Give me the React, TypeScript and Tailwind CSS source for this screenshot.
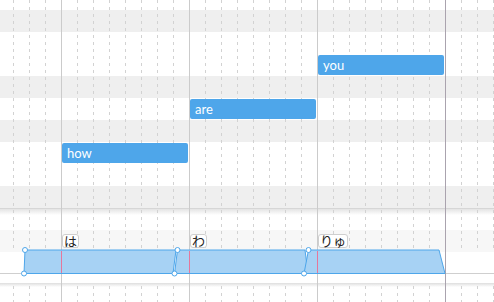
import React from "react";

type Note = { text: string; left: number; top: number };

const notes: Note[] = [
  { text: "how", left: 62, top: 143 },
  { text: "are", left: 190, top: 99 },
  { text: "you", left: 318, top: 55 },
];

// row backgrounds of the piano roll, 22px each (first one cut off)
const rows: { h: string; bg: string }[] = [
  { h: "h-[10px]", bg: "bg-white" },
  { h: "h-[22px]", bg: "bg-[#efefef]" },
  { h: "h-[22px]", bg: "bg-white" },
  { h: "h-[22px]", bg: "bg-white" },
  { h: "h-[22px]", bg: "bg-[#efefef]" },
  { h: "h-[22px]", bg: "bg-white" },
  { h: "h-[22px]", bg: "bg-[#efefef]" },
  { h: "h-[22px]", bg: "bg-white" },
  { h: "h-[22px]", bg: "bg-white" },
  { h: "h-[22px]", bg: "bg-[#efefef]" },
];

const lyrics = [
  { text: "は", left: 62 },
  { text: "わ", left: 190 },
  { text: "りゅ", left: 318 },
];

// lyric blocks: [tl, bl, tr, br] x coords
const blocks = [
  [25, 24, 176, 173],
  [177.5, 174.5, 305, 308],
  [308.5, 304, 439, 445],
];

function GridLines() {
  const dashed: number[] = [];
  for (let x = 13.5; x < 494; x += 16) {
    if ((x - 61.5) % 128 !== 0) dashed.push(x);
  }
  return (
    <svg className="absolute inset-0 pointer-events-none" width={494} height={302}>
      {dashed.map((x) => (
        <g key={x} stroke="#d2d2d2" strokeWidth={1} strokeDasharray="3 4">
          <line x1={x} y1={0} x2={x} y2={252} />
          <line x1={x} y1={286} x2={x} y2={302} />
        </g>
      ))}
      {[61.5, 189.5, 317.5].map((x) => (
        <line key={x} x1={x} y1={0} x2={x} y2={302} stroke="#cbcbcb" />
      ))}
      <line x1={445.5} y1={0} x2={445.5} y2={302} stroke="#aaa3ae" />
    </svg>
  );
}

export default function App() {
  return (
    <div className="relative w-[494px] h-[302px] overflow-hidden bg-white font-['Lato','Open_Sans',sans-serif]">
      {/* piano roll */}
      <div className="relative h-[208px] flex flex-col">
        {rows.map((r, i) => (
          <div key={i} className={`${r.h} ${r.bg} shrink-0`} />
        ))}
      </div>

      {/* splitter */}
      <div className="h-[7px] border-t border-[#d6d6d6] bg-gradient-to-b from-[#e4e4e4] to-white" />

      {/* lyric track */}
      <div className="h-[15px] bg-white" />
      <div className="h-[22px] bg-[#f7f7f7]" />
      <div className="h-[22px] border-b border-[#cfcfcf] bg-white" />
      <div className="h-[9px] bg-white" />
      <div className="h-[4px] bg-gradient-to-b from-[#dedede] to-white" />
      <div className="h-[15px] bg-white" />

      <GridLines />

      {notes.map((n) => (
        <div
          key={n.text}
          className="absolute z-10 w-[126px] h-[20px] rounded-[2px] bg-[#4ea6ea] pl-[5px] text-[13px] leading-[20px] text-white"
          style={{ left: n.left, top: n.top }}
        >
          {n.text}
        </div>
      ))}

      <svg className="absolute inset-0 z-10 pointer-events-none" width={494} height={302}>
        {blocks.map(([tl, bl, tr, br], i) => (
          <polygon
            key={i}
            points={`${tl},250 ${tr},250 ${br},273.5 ${bl},273.5`}
            fill="#a7d2f4"
            stroke="#4ea6ea"
            strokeWidth={1}
          />
        ))}
        {[61.5, 189.5, 317.5].map((x) => (
          <line key={x} x1={x} y1={251} x2={x} y2={273} stroke="#e5779c" />
        ))}
        {blocks.map(([tl, bl], i) => (
          <g key={i} fill="white" stroke="#4ea6ea" strokeWidth={1}>
            <circle cx={tl} cy={250} r={2.5} />
            <circle cx={bl} cy={273.5} r={2.5} />
          </g>
        ))}
      </svg>

      {lyrics.map((l) => (
        <div
          key={l.text}
          className="absolute z-20 h-[14px] px-[1px] rounded-[3px] border border-[#cfcfcf] bg-white text-[13px] leading-[12px] text-[#222] font-['Noto_Sans_CJK_JP',sans-serif]"
          style={{ left: l.left, top: 234 }}
        >
          {l.text}
        </div>
      ))}
    </div>
  );
}
